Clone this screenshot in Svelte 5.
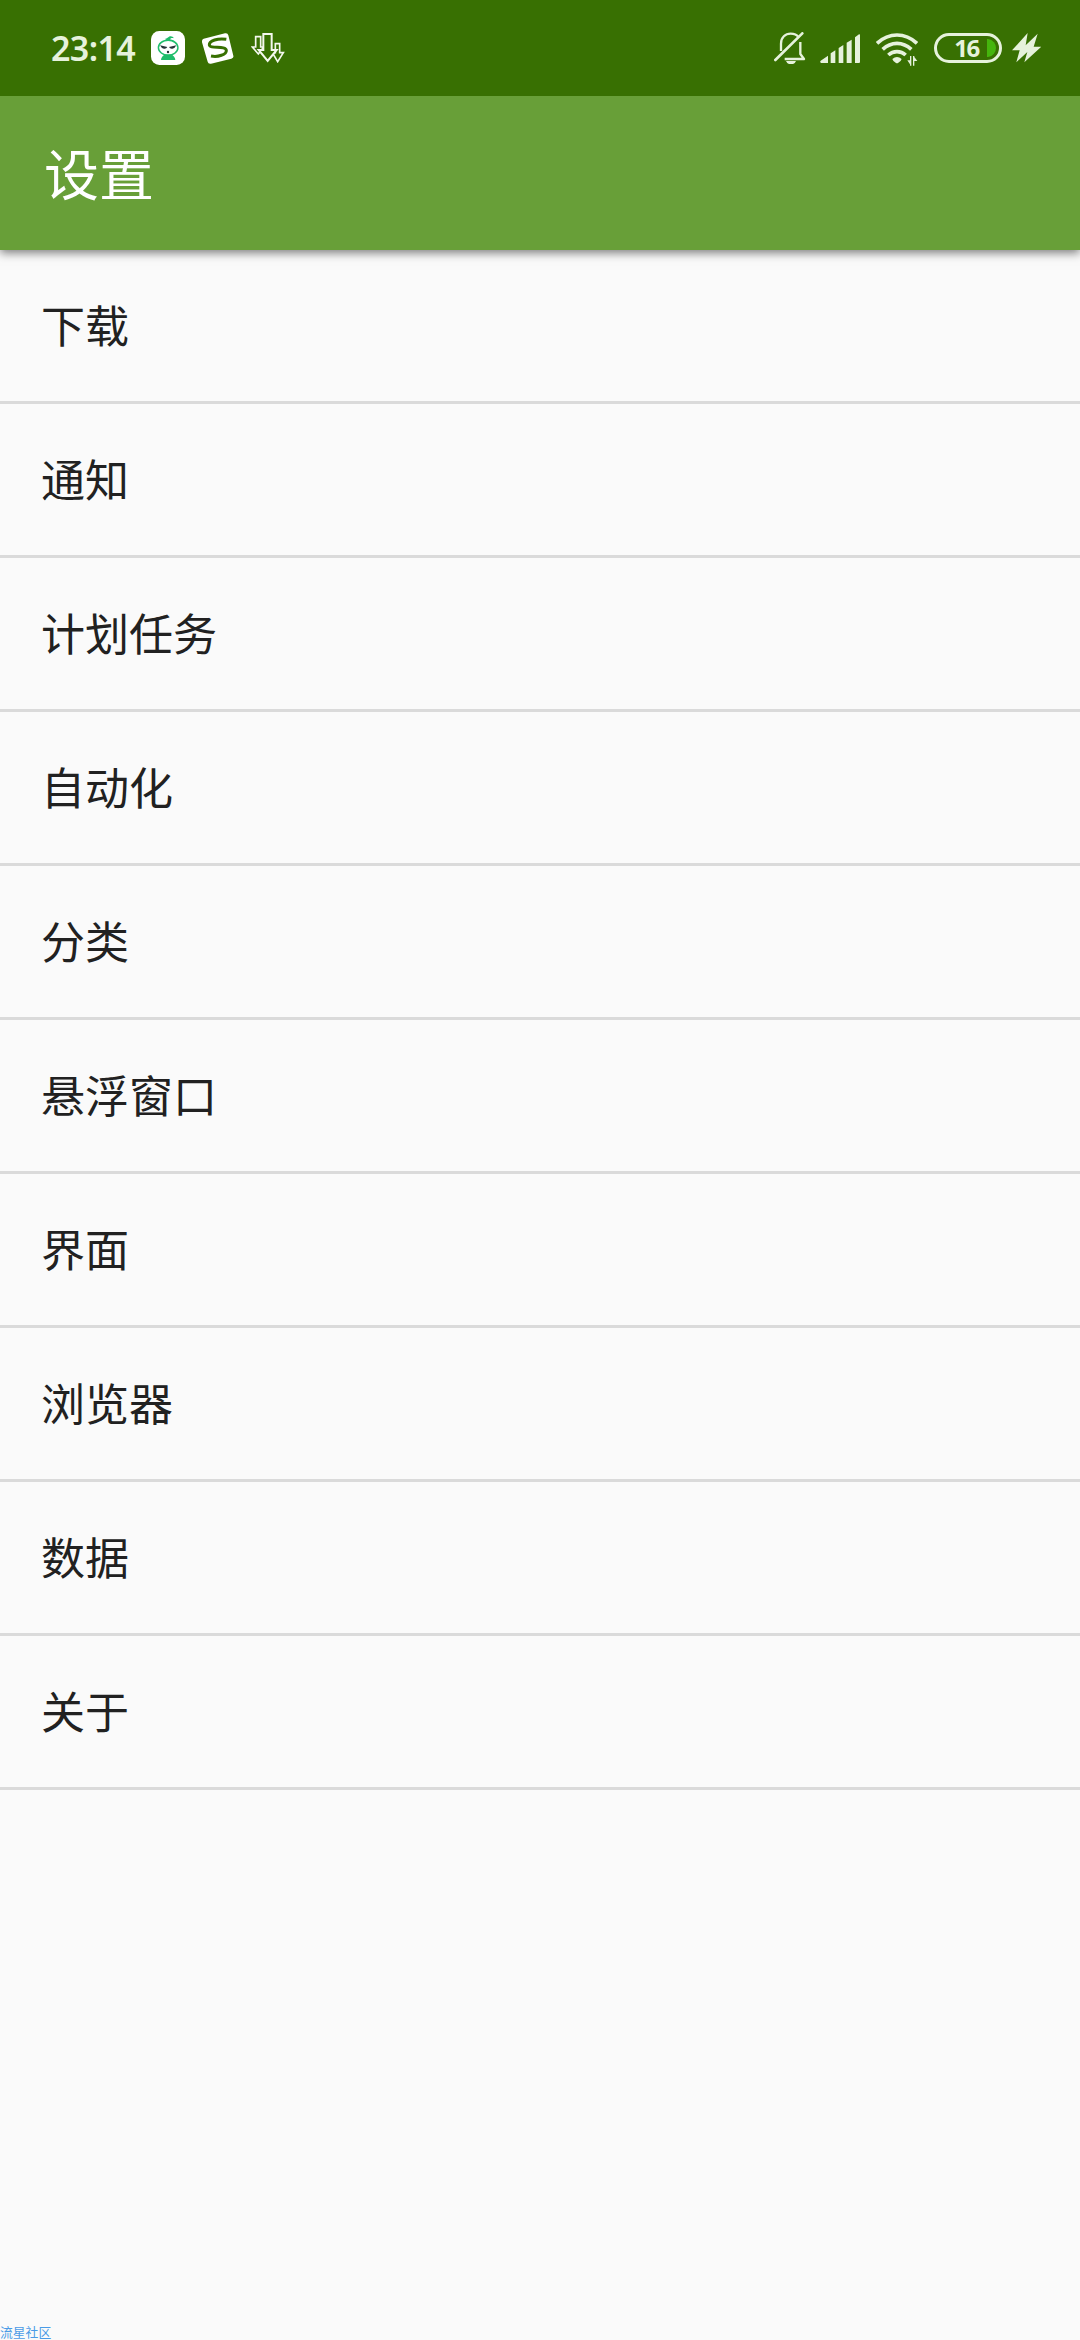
<script lang="ts">
    const title = '设置';
    const time = '23:14';
    const battery = 16;

    const items: string[] = [
        '下载',
        '通知',
        '计划任务',
        '自动化',
        '分类',
        '悬浮窗口',
        '界面',
        '浏览器',
        '数据',
        '关于'
    ];
</script>

<div class="screen">
    <div class="status-bar">
        <div class="status-left">
            <span class="time">{time}</span>
            <svg class="app-icon" viewBox="0 0 102 102" width="34" height="34">
                <rect width="102" height="102" rx="25" fill="#fff" />
                <path d="M30 87 C30 79 36 75 41 70 H62 C67 75 73 79 73 87 Z" fill="#1fbd6b" />
                <path d="M41 24 C45 23 50 20 54 17 C59 14 66 16 69 22 C63 20 59 22 57 25 C72 27 83 38 83 50 C83 64 69 74 52 74 C35 74 20 64 20 50 C20 37 32 26 46 26 Z" fill="#1fbd6b" />
                <ellipse cx="51.500" cy="50" rx="27" ry="20" fill="#fff" />
                <path d="M27 43 L49 48 Q46 54 39 53 Q31 52 27 43 Z M76 43 L54 48 Q57 54 64 53 Q72 52 76 43 Z" fill="#263238" />
                <ellipse cx="51" cy="63" rx="3.500" ry="4" fill="#263238" />
            </svg>
            <svg class="s-icon" viewBox="0 0 96 96" width="32" height="32">
                <path d="M5 20 L69 4 Q77 2 79 10 L94 71 Q96 78 88 80 L27 95 Q19 97 17 89 L0 31 Q-1 22 5 20 Z" fill="#fff" />
                <path d="M73 22 C48 18 21 26 22 39 C23 51 72 40 73 55 C74 68 48 76 27 72" fill="none" stroke="#387002" stroke-width="9" />
            </svg>
            <svg class="arrows-icon" viewBox="0 0 102 90" width="34" height="30">
                <g fill="#387002" stroke="#f4f8ee" stroke-width="5">
                    <path d="M14 11 H29 V42 H38 L22 63 L4 42 H14 Z" />
                    <path d="M73 32 H86 V59 H97 L80 86 L64 59 H73 Z" />
                    <path d="M37 3 H62 V51 H77 L50 84 L23 51 H37 Z" stroke-width="6" />
                </g>
            </svg>
        </div>

        <div class="status-right">
            <svg class="bell-icon" viewBox="0 0 96 98" width="32" height="32.67">
                <g fill="none" stroke="#e6f2dc" stroke-width="7">
                    <path d="M21 57 V35 C21 16 34 5 50 5 C61 5 69 9 74 16" />
                    <path d="M79 30 V66 L90 81 H32" stroke-linejoin="round" />
                    <path d="M4 84 L85 4" stroke-width="8" stroke-linecap="round" />
                </g>
                <path d="M36 87 H66 Q62 97 51 97 Q40 97 36 87 Z" fill="#e6f2dc" />
            </svg>
            <svg class="signal-icon" viewBox="0 0 120 87" width="40" height="29">
                <path d="M2 80 L24 65 V87 H4 Q-2 85 2 80 Z M32 58 L46 49 V87 H32 Z M56 42 L70 33 V87 H56 Z M80 26 L95 17 V87 H80 Z M105 10 L117 1 Q120 0 120 3 V84 Q120 87 117 87 H105 Z" fill="#e6f2dc" />
            </svg>
            <svg class="wifi-icon" viewBox="0 0 126 99" width="42" height="33">
                <g fill="none" stroke="#e6f2dc" stroke-width="11">
                    <path d="M3 31 Q30 6 63 6 Q96 6 123 31" />
                    <path d="M20 49 Q39 31 63 31 Q87 31 106 49" />
                    <path d="M37 66 Q48 56 63 56 Q78 56 89 66" />
                </g>
                <path d="M49 78 Q63 66 77 78 Q76 84 66 90 Q63 92 60 90 Q50 84 49 78 Z" fill="#e6f2dc" />
                <path d="M102 69 H106 V98 H102 V94 L94 82 H102 Z M111 69 H115 V72 L124 84 H115 V98 H111 Z" fill="#e6f2dc" />
            </svg>
            <div class="battery">
                <span>{battery}</span>
                <svg viewBox="0 0 27 54" width="9" height="18">
                    <path d="M0 0 H3 Q14 1 21 10 Q27 18 27 27 Q27 36 21 44 Q14 53 3 54 H0 Z" fill="#45b50d" />
                </svg>
            </div>
            <svg class="bolt-icon" viewBox="0 0 88 90" width="29.33" height="30">
                <path d="M47 0 L0 52 H23 L13 88 L46 57 L37 88 L88 41 H65 L77 2 L41 37 Z" fill="#e6f2dc" />
            </svg>
        </div>
    </div>

    <header class="toolbar">
        <h1>{title}</h1>
    </header>

    <ul class="settings">
        {#each items as item}
            <li>{item}</li>
        {/each}
    </ul>

    <div class="watermark">流星社区</div>
</div>

<style>
    :global(body) {
        margin: 0;
        background: #fafafa;
    }

    .screen {
        display: flex;
        flex-direction: column;
        width: 1080px;
        height: 2340px;
        overflow: hidden;
        background: #fafafa;
        font-family: "Noto Sans CJK SC", sans-serif;
    }

    .status-bar {
        display: flex;
        justify-content: space-between;
        flex: none;
        position: relative;
        z-index: 2;
        box-sizing: border-box;
        height: 96px;
        padding: 0 39px 0 51px;
        background: #387002;
        color: #e6f2dc;
    }

    .status-left,
    .status-right {
        display: flex;
        align-items: center;
    }

    .status-bar svg {
        display: block;
        flex: none;
    }

    .time {
        width: 100px;
        font-family: "Noto Sans", sans-serif;
        font-size: 34px;
        font-weight: 600;
        line-height: 96px;
        letter-spacing: -0.6px;
    }

    .s-icon {
        margin-left: 17px;
    }

    .arrows-icon {
        margin-left: 17px;
    }

    .signal-icon {
        margin-left: 14px;
    }

    .wifi-icon {
        margin: 3px 0 0 16px;
    }

    .battery {
        display: flex;
        align-items: center;
        justify-content: flex-end;
        gap: 8px;
        box-sizing: border-box;
        width: 68px;
        height: 30px;
        margin: 0 10px 0 16px;
        padding-right: 3px;
        border: 3px solid #e6f2dc;
        border-radius: 15px;
    }

    .battery span {
        font-family: "Noto Sans", sans-serif;
        font-size: 24px;
        font-weight: 700;
        line-height: 24px;
        letter-spacing: -1.5px;
    }

    .toolbar {
        display: flex;
        align-items: center;
        flex: none;
        position: relative;
        box-sizing: border-box;
        height: 154px;
        padding: 0 0 4px 44px;
        background: #689f38;
        box-shadow: 0 3px 9px rgba(0, 0, 0, 0.5);
    }

    h1 {
        margin: 0;
        color: #fff;
        font-size: 55px;
        font-weight: 400;
        line-height: 80px;
    }

    .settings {
        flex: 1;
        margin: 0;
        padding: 0;
        list-style: none;
    }

    li {
        box-sizing: border-box;
        height: 154px;
        padding-left: 41px;
        border-bottom: 3px solid #dadada;
        color: #212121;
        font-size: 44px;
        line-height: 149px;
    }

    .watermark {
        flex: none;
        height: 17px;
        color: #4a9be6;
        font-size: 12.8px;
        line-height: 17px;
    }
</style>
